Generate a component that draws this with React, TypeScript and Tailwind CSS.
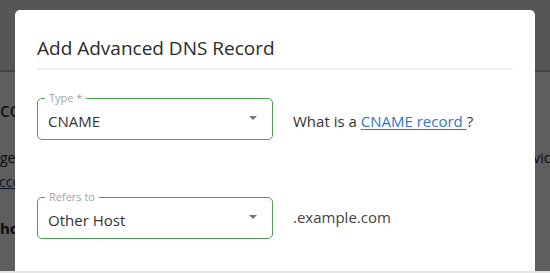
import React from 'react';

const Caret = () => (
  <svg width="8" height="4" viewBox="0 0 8 4" className="shrink-0">
    <path d="M0 0 L8 0 L4 4 Z" fill="#757575" />
  </svg>
);

const OutlinedSelect = ({ label, value }: { label: string; value: string }) => (
  <div className="relative w-[236px] h-[42px] shrink-0 rounded-[5px] border-[1.5px] border-[#4aa257] flex items-start pl-[10px] pr-[15px] pt-[12px]">
    <span className="absolute -top-[9px] left-[7px] bg-white px-[4px] text-[11px] leading-[16px] text-[#a3a3a3]">
      {label}
    </span>
    <span className="flex-1 text-[15px] leading-[20px] text-[#333]">{value}</span>
    <span className="pt-[5px]">
      <Caret />
    </span>
  </div>
);

const App = () => {
  return (
    <div
      className="relative h-[273px] w-[550px] overflow-hidden bg-white border-b-2 border-[#e6e6e6] whitespace-nowrap"
      style={{ fontFamily: '"Open Sans", "Noto Sans", sans-serif' }}
    >
      {/* page underneath the dialog */}
      <div className="h-[72px] bg-[#eaeaea] border-b-[2px] border-[#b5b5b5]" />
      <div className="pt-[24px] text-[#222]">
        <p className="text-[20px] leading-[28px]">connect your domain</p>
        <div className="flex mt-[24px] text-[14px] leading-[20px]">
          <span className="w-[513px] shrink-0 overflow-hidden">getting started with</span>
          <span>services</span>
        </div>
        <p className="text-[14px] leading-[20px] mt-[4px] underline text-[#1d3f7a] -ml-[1px]">ccount settings</p>
        <p className="text-[15px] leading-[20px] mt-[26px] font-bold">hosting</p>
      </div>

      {/* backdrop + dialog */}
      <div className="absolute inset-0 bg-black/[0.63] flex px-[15px] pt-[10px]">
        <div className="flex-1 bg-white rounded-t-[5px] px-[22px] pt-[26px] text-[#333]">
          <h2 className="text-[19px] leading-[24px] font-normal text-[#2b2b2b]">Add Advanced DNS Record</h2>
          <div className="mt-[8px] h-[1.5px] bg-[#ececec]" />

          <div className="mt-[28px] flex items-start gap-[20px]">
            <OutlinedSelect label="Type *" value="CNAME" />
            <p className="pt-[13px] text-[15px] leading-[20px] text-[#333]">
              What is a{' '}
              <a href="#" className="text-[#2f74d0] underline underline-offset-2">
                CNAME record{' '}
              </a>
              ?
            </p>
          </div>

          <div className="mt-[57px] flex items-start gap-[20px]">
            <OutlinedSelect label="Refers to" value="Other Host" />
            <p className="pt-[10px] text-[15px] leading-[20px] text-[#444]">.example.com</p>
          </div>
        </div>
      </div>
    </div>
  );
};

export default App;
